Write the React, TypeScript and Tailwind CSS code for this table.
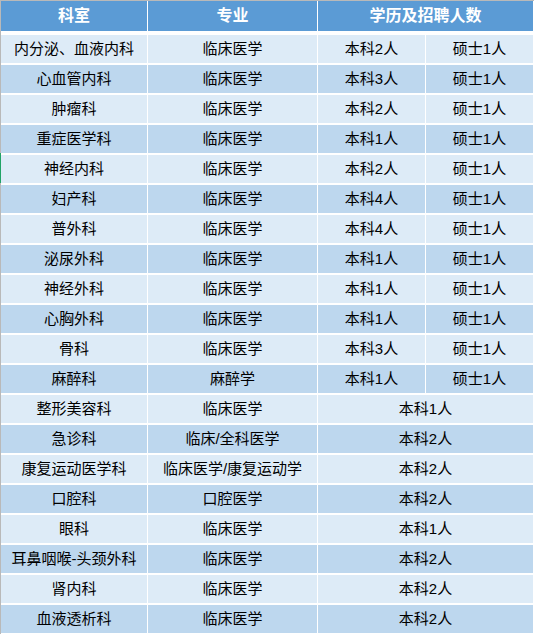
import React from 'react'

type Row = { dept: string; major: string; bk: string; ss?: string }

const rows: Row[] = [
  { dept: '内分泌、血液内科', major: '临床医学', bk: '本科2人', ss: '硕士1人' },
  { dept: '心血管内科', major: '临床医学', bk: '本科3人', ss: '硕士1人' },
  { dept: '肿瘤科', major: '临床医学', bk: '本科2人', ss: '硕士1人' },
  { dept: '重症医学科', major: '临床医学', bk: '本科1人', ss: '硕士1人' },
  { dept: '神经内科', major: '临床医学', bk: '本科2人', ss: '硕士1人' },
  { dept: '妇产科', major: '临床医学', bk: '本科4人', ss: '硕士1人' },
  { dept: '普外科', major: '临床医学', bk: '本科4人', ss: '硕士1人' },
  { dept: '泌尿外科', major: '临床医学', bk: '本科1人', ss: '硕士1人' },
  { dept: '神经外科', major: '临床医学', bk: '本科1人', ss: '硕士1人' },
  { dept: '心胸外科', major: '临床医学', bk: '本科1人', ss: '硕士1人' },
  { dept: '骨科', major: '临床医学', bk: '本科3人', ss: '硕士1人' },
  { dept: '麻醉科', major: '麻醉学', bk: '本科1人', ss: '硕士1人' },
  { dept: '整形美容科', major: '临床医学', bk: '本科1人' },
  { dept: '急诊科', major: '临床/全科医学', bk: '本科2人' },
  { dept: '康复运动医学科', major: '临床医学/康复运动学', bk: '本科2人' },
  { dept: '口腔科', major: '口腔医学', bk: '本科2人' },
  { dept: '眼科', major: '临床医学', bk: '本科1人' },
  { dept: '耳鼻咽喉-头颈外科', major: '临床医学', bk: '本科2人' },
  { dept: '肾内科', major: '临床医学', bk: '本科2人' },
  { dept: '血液透析科', major: '临床医学', bk: '本科2人' },
]

const font = { fontFamily: '"Liberation Sans", "Noto Sans CJK SC", sans-serif' }

export default function App() {
  return (
    <div className="w-[534px] h-[634px] overflow-hidden bg-white flex flex-col text-black" style={font}>
      <div className="h-px bg-[#b9b9b9] shrink-0" />
      <div className="flex flex-1 min-h-0">
        <div className="w-px flex flex-col shrink-0">
          <div className="h-[152px] bg-[#b9b9b9]" />
          <div className="h-[30px] bg-[#21a366]" />
          <div className="flex-1 bg-[#b9b9b9]" />
        </div>
        <div className="w-[533px] flex flex-col">
          <div className="grid grid-cols-[146px_169px_215px] gap-x-px h-[30px] mb-[4px] shrink-0">
            <div className="bg-[#5b9bd5] flex items-center justify-center text-white text-[16px] font-bold">科室</div>
            <div className="bg-[#5b9bd5] flex items-center justify-center text-white text-[16px] font-bold">专业</div>
            <div className="bg-[#5b9bd5] flex items-center justify-center text-white text-[16px] font-bold">学历及招聘人数</div>
          </div>
          <div className="flex flex-col gap-y-[2px]">
            {rows.map((r, i) => {
              const bg = i % 2 === 0 ? 'bg-[#ddebf7]' : 'bg-[#bdd7ee]'
              return (
                <div key={i} className="grid grid-cols-[146px_169px_107px_107px] gap-x-px h-[28px] text-[15px]">
                  <div className={`${bg} flex items-center justify-center whitespace-nowrap`}>{r.dept}</div>
                  <div className={`${bg} flex items-center justify-center whitespace-nowrap`}>{r.major}</div>
                  {r.ss ? (
                    <>
                      <div className={`${bg} flex items-center justify-center`}>{r.bk}</div>
                      <div className={`${bg} flex items-center justify-center`}>{r.ss}</div>
                    </>
                  ) : (
                    <div className={`${bg} col-span-2 flex items-center justify-center`}>{r.bk}</div>
                  )}
                </div>
              )
            })}
          </div>
        </div>
      </div>
    </div>
  )
}
